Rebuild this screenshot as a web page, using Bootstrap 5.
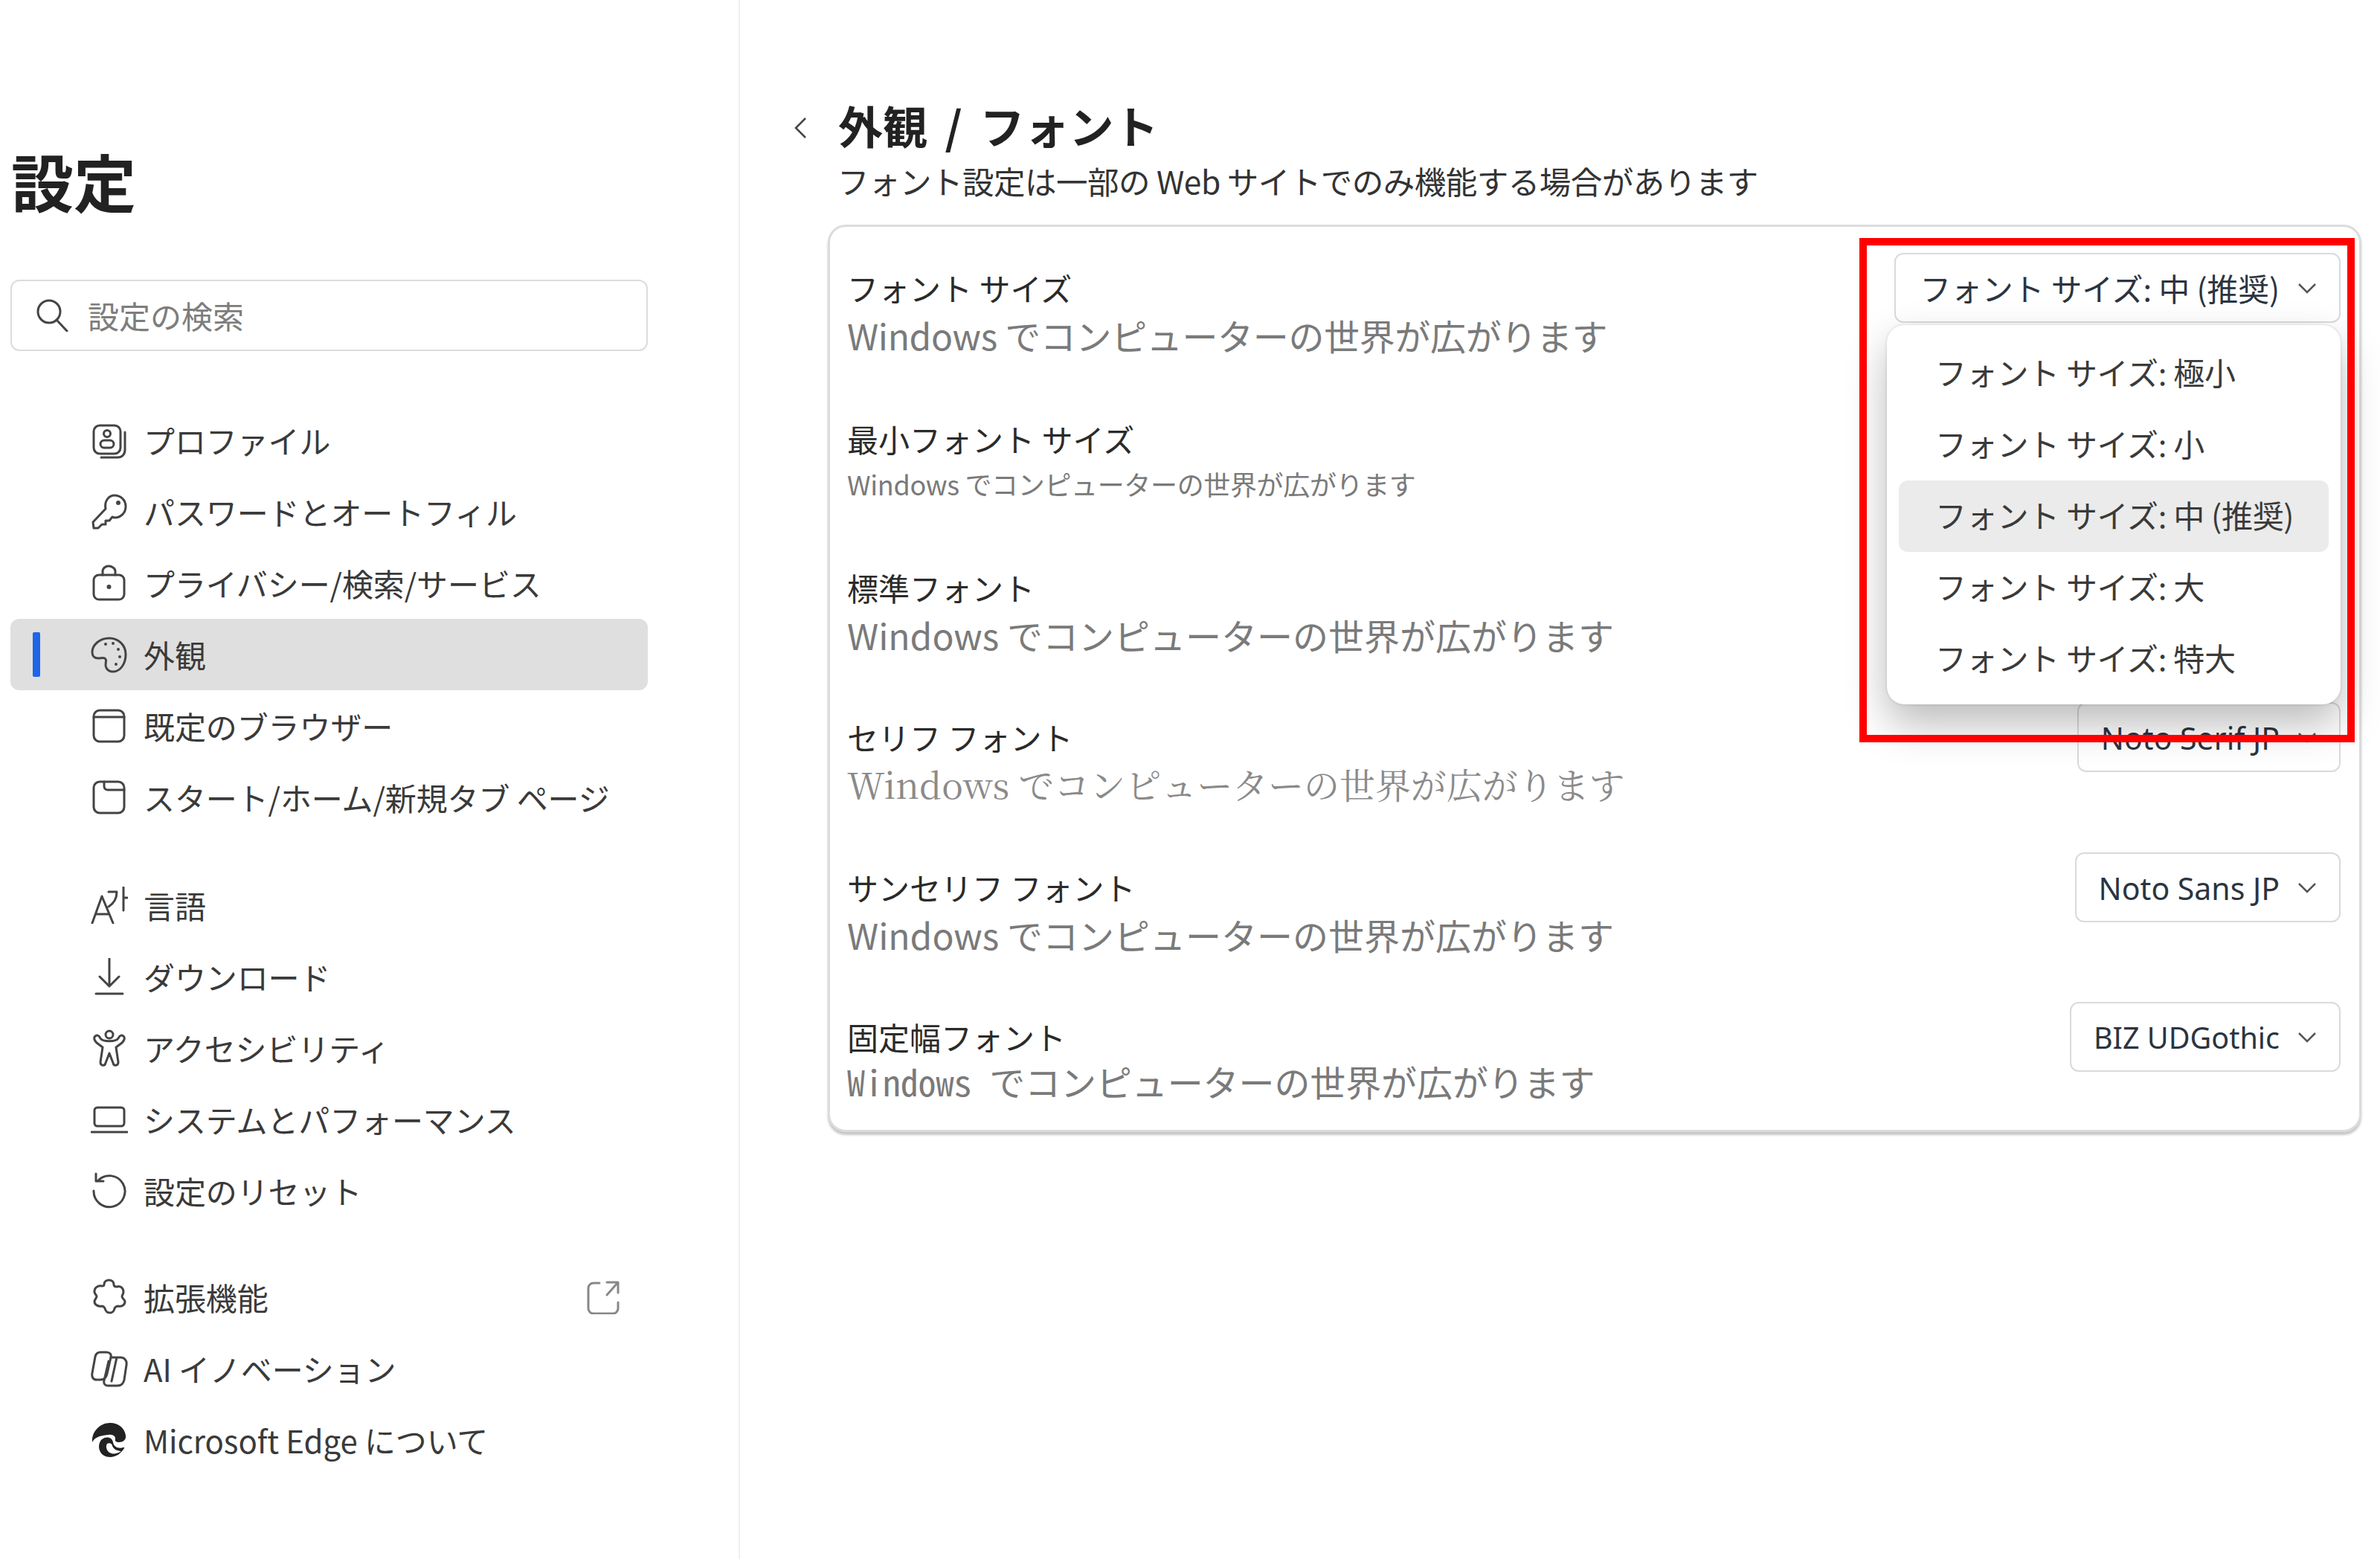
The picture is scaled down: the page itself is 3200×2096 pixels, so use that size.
<!DOCTYPE html>
<html lang="ja">
<head>
<meta charset="utf-8">
<title>設定</title>
<link href="https://cdn.jsdelivr.net/npm/bootstrap@5.3.0/dist/css/bootstrap.min.css" rel="stylesheet">
<style>
:root{--jp:"Noto Sans CJK JP","Noto Sans",sans-serif}
html,body{height:100%}
body{font-family:var(--jp);background:#fff;color:#333;width:3200px;height:2096px;overflow:hidden}
.side-pane{width:995px;height:2096px;flex:none;border-right:2px solid #efefef;padding:193px 122px 0 14px}
.side-title{font-size:84px;line-height:100px;font-weight:700;color:#222;margin:0 0 83px 1px}
.side-search{height:96px;border:2px solid #dcdcdc;border-radius:12px;padding-left:32px;gap:26px;margin-bottom:72px}
.side-search input{border:0;outline:0;padding:0;font-size:42px;line-height:60px;color:#333;background:none;box-shadow:none}
.side-search input::placeholder{color:#7d7d7d;opacity:1}
.side-group{margin-bottom:47px}
.side-group.first-group{margin-bottom:49px}
.side-link{height:96px;padding:0 0 0 108px;gap:21px;font-size:42px;line-height:56px;color:#3a3a3a;border-radius:12px;position:relative;letter-spacing:-.1px}
.side-link:hover{color:#3a3a3a}
.side-link.active{background:#dfdfdf}
.side-bar{position:absolute;left:30px;top:18px;width:10px;height:60px;background:#1f65e8;border-radius:2px}
.glyph{width:50px;height:50px;flex:none;fill:none;stroke:#444;stroke-width:3;stroke-linecap:round;stroke-linejoin:round}
.glyph-ext{width:44px;height:46px;stroke:#888;margin-left:auto;margin-right:38px}
.main-pane{padding:128px 25px 0 118px;flex:1;min-width:0}
.main-head{height:80px;gap:41px;margin-left:-47px}
.main-head svg{width:20px;height:30px;fill:none;stroke:#444;stroke-width:2.5;flex:none;margin-top:7px}
.main-title{font-size:60px;line-height:80px;font-weight:700;color:#222;margin:0;word-spacing:10px}
.main-sub{font-size:42.5px;line-height:60px;color:#333;margin:5px 0 29px 13px;letter-spacing:-.5px}
.font-card{border:3px solid #dcdcdc;border-radius:24px;padding:35px 25px 0 23px;height:1220px;box-shadow:0 4px 3px rgba(0,0,0,.22);background:#fff}
.font-row{height:201.4px;flex:none}
.font-copy{padding-top:20px}
.font-copy.lower{padding-top:22px}
.font-name{font-size:42px;line-height:54px;color:#2a2a2a}
.font-desc{font-size:48px;line-height:68px;color:#7a7a7a;margin-top:2px;letter-spacing:-.35px}
.font-desc.wide{letter-spacing:0}
.font-desc.tiny{font-size:36px;line-height:62px}
.font-desc.face-serif{font-family:"Noto Serif CJK JP","Liberation Serif",var(--jp);color:#8a8a8a;letter-spacing:-.05px}
.font-desc.face-mono{font-family:"Noto Sans Mono CJK JP","Liberation Mono",var(--jp);margin-top:-2px;letter-spacing:-.1px}
.font-pick{height:94px;padding:0 30px 0 33px;gap:24px;font-size:41.7px;color:#2b3440;border:2px solid #dadada;border-radius:12px;background:#fff;white-space:nowrap}
.font-pick svg{width:26px;height:16px;fill:none;stroke:#555;stroke-width:2.5;flex:none}
.font-pick.latin{font-family:"Noto Sans",var(--jp);font-size:41px;padding-left:30px;padding-top:4px}
.font-pick.latin svg{margin-top:-4px}
.font-pick.tight{font-size:39.5px}
.size-menu{display:block;position:absolute;top:97px;right:0;width:610px;padding:17px 16px 13px;border:0;border-radius:24px;background:#fff;box-shadow:0 0 4px rgba(0,0,0,.14),0 26px 56px rgba(0,0,0,.27)}
.size-menu .dropdown-item{height:96px;line-height:92px;padding:0 0 0 49px;font-size:42px;color:#3a3a3a;border-radius:12px;letter-spacing:-.3px}
.size-menu .dropdown-item.active{background:#ebebeb;color:#3a3a3a}
.red-frame{position:absolute;left:1384px;top:15px;width:666px;height:678px;border:10px solid #f00;pointer-events:none;z-index:1100}
</style>
</head>
<body class="d-flex">

<aside class="side-pane">
  <h1 class="side-title">設定</h1>
  <div class="side-search d-flex align-items-center">
    <svg class="glyph" style="width:44px;height:44px" viewBox="0 0 44 44"><circle cx="18" cy="17" r="15"/><path d="M28 28l14 15"/></svg>
    <input type="text" class="flex-grow-1" placeholder="設定の検索">
  </div>

  <nav class="nav flex-column side-group first-group">
    <a class="nav-link side-link d-flex align-items-center" href="#"><svg class="glyph" viewBox="0 0 50 50"><rect x="4" y="5" width="36" height="38" rx="8"/><path d="M46 14v24c0 6-4 10-10 10H14"/><circle cx="22" cy="16" r="4.5"/><rect x="13" y="25" width="18" height="10" rx="5"/></svg><span>プロファイル</span></a>
    <a class="nav-link side-link d-flex align-items-center" href="#"><svg class="glyph" viewBox="0 0 50 50"><path d="M32 3c8 0 15 6 15 15s-7 15-15 15l-3-1-4 5h-5v5h-5l-5 5H4l-1-8 17-18C18 11 24 3 32 3Z"/><circle cx="37" cy="13" r="1.5" fill="#444"/></svg><span>パスワードとオートフィル</span></a>
    <a class="nav-link side-link d-flex align-items-center" href="#"><svg class="glyph" viewBox="0 0 50 50"><rect x="4" y="14" width="41" height="33" rx="7"/><path d="M16 14V9c0-4 4-7 8-7s9 3 9 7v5"/><circle cx="24.500" cy="30" r="1.500" fill="#444"/></svg><span>プライバシー/検索/サービス</span></a>
    <a class="nav-link side-link active d-flex align-items-center" href="#"><span class="side-bar"></span><svg class="glyph" viewBox="0 0 50 50"><path d="M25 3C12 3 2 12 2 22c0 5 3 8 8 8 4 0 8-2 10 1 2 4-2 7 1 12 2 4 6 5 9 5 10 0 17-11 17-23C47 12 37 3 25 3Z"/><g fill="#444" stroke="none"><circle cx="20" cy="11" r="2"/><circle cx="30" cy="10" r="2"/><circle cx="37" cy="18" r="2"/><circle cx="39" cy="28" r="2"/><circle cx="34" cy="38" r="2"/></g></svg><span>外観</span></a>
    <a class="nav-link side-link d-flex align-items-center" href="#"><svg class="glyph" viewBox="0 0 50 50"><rect x="4" y="4" width="41" height="42" rx="8"/><path d="M4 13h41"/></svg><span>既定のブラウザー</span></a>
    <a class="nav-link side-link d-flex align-items-center" href="#"><svg class="glyph" viewBox="0 0 50 50"><rect x="4" y="4" width="41" height="42" rx="8"/><path d="M18 4v6c0 3 2 5 5 5h22"/></svg><span>スタート/ホーム/新規タブ ページ</span></a>
  </nav>

  <nav class="nav flex-column side-group">
    <a class="nav-link side-link d-flex align-items-center" href="#"><svg class="glyph" viewBox="0 0 50 50"><path d="M2 49 15 13l15 36M7 37h18M24 7h11c0 8-3 15-11 20M44 1v31M44 15h5"/></svg><span>言語</span></a>
    <a class="nav-link side-link d-flex align-items-center" href="#"><svg class="glyph" viewBox="0 0 50 50"><path d="M25 1v37M12 25l13 13 13-13M7 48h36"/></svg><span>ダウンロード</span></a>
    <a class="nav-link side-link d-flex align-items-center" href="#"><svg class="glyph" viewBox="0 0 50 50"><circle cx="25" cy="7" r="5"/><path d="M6 9c3-2 5-1 7 3 3 5 21 5 24 0 2-4 4-5 7-3 3 3 0 7-2 9l-8 6 3 20c0 5-6 6-7 1l-5-13-5 13c-1 5-7 4-7-1l3-20-8-6c-2-2-5-6-2-9Z"/></svg><span>アクセシビリティ</span></a>
    <a class="nav-link side-link d-flex align-items-center" href="#"><svg class="glyph" viewBox="0 0 50 50"><rect x="5" y="9" width="40" height="25" rx="4"/><path d="M1 42h48"/></svg><span>システムとパフォーマンス</span></a>
    <a class="nav-link side-link d-flex align-items-center" href="#"><svg class="glyph" viewBox="0 0 50 50"><path d="M10 11A21 21 0 1 1 4 25M7 2v10h10"/></svg><span>設定のリセット</span></a>
  </nav>

  <nav class="nav flex-column">
    <a class="nav-link side-link d-flex align-items-center" href="#"><svg class="glyph" viewBox="0 0 50 50"><path d="M18 8c0-8 13-8 13 0 0 2 1 3 4 3 5-2 9 2 9 7 0 3-2 4-2 6 0 3 4 4 4 7 0 5-5 7-9 6-3 0-4 1-5 3-1 8-11 8-13 0-1-2-2-3-4-3-5 1-10-2-10-6 0-3 3-5 3-7s-4-4-3-8c1-5 6-7 10-6 2 0 3-1 3-2Z"/></svg><span>拡張機能</span><svg class="glyph glyph-ext" viewBox="0 0 44 46"><path d="M17 4H9a7 7 0 0 0-7 7v27a7 7 0 0 0 7 7h26a7 7 0 0 0 7-7v-8M27 3h15v14M42 3 27 20"/></svg></a>
    <a class="nav-link side-link d-flex align-items-center" href="#"><svg class="glyph" viewBox="0 0 50 50"><path d="M13 3h8c5 0 7 3 6 7l-5 22c-1 5-4 8-9 8H8c-5 0-7-4-6-9l4-22c1-4 3-6 7-6Z"/><path d="M27 10h13c5 0 9 4 8 10l-3 20c-1 5-4 8-9 8H23c-4 0-6-3-5-7l6-26M35 10l-7 32"/></svg><span>AI イノベーション</span></a>
    <a class="nav-link side-link d-flex align-items-center" href="#"><svg class="glyph" viewBox="0 0 50 50" style="stroke:none"><path fill="#222" d="M2 28C1 13 13 2 26 2c11 0 20 7 21 17 1 6-4 9-9 9-4 0-6-2-5-4 1-3-3-7-9-6C11 19 5 22 2 28Z"/><path fill="#222" d="M15 24c7-5 14-2 15 4 1 7 8 9 14 7 1 0 2 0 1 1-4 7-11 12-19 12-6 0-12-3-14-9-2-5-1-11 3-15Z"/><path fill="#fff" d="M22 30c3-2 7 0 7 3 2 5 8 7 12 7-6 4-14 5-18 0-2-3-3-7-1-10Z"/></svg><span>Microsoft Edge について</span></a>
  </nav>
</aside>

<main class="main-pane">
  <div class="main-head d-flex align-items-center">
    <svg viewBox="0 0 20 30"><path d="M17 2 4 15l13 13"/></svg>
    <h2 class="main-title">外観 / フォント</h2>
  </div>
  <p class="main-sub">フォント設定は一部の Web サイトでのみ機能する場合があります</p>

  <div class="card font-card">
    <div class="font-row d-flex justify-content-between align-items-start">
      <div class="font-copy"><div class="font-name">フォント サイズ</div><div class="font-desc">Windows でコンピューターの世界が広がります</div></div>
      <div class="position-relative">
        <button type="button" class="btn font-pick d-flex align-items-center">フォント サイズ: 中 (推奨)<svg viewBox="0 0 26 16"><path d="M2 3l11 11L24 3"/></svg></button>
        <ul class="dropdown-menu size-menu list-unstyled m-0">
          <li><a class="dropdown-item" href="#">フォント サイズ: 極小</a></li>
          <li><a class="dropdown-item" href="#">フォント サイズ: 小</a></li>
          <li><a class="dropdown-item active" href="#">フォント サイズ: 中 (推奨)</a></li>
          <li><a class="dropdown-item" href="#">フォント サイズ: 大</a></li>
          <li><a class="dropdown-item" href="#">フォント サイズ: 特大</a></li>
        </ul>
      </div>
    </div>
    <div class="font-row d-flex justify-content-between align-items-start">
      <div class="font-copy lower"><div class="font-name">最小フォント サイズ</div><div class="font-desc tiny">Windows でコンピューターの世界が広がります</div></div>
    </div>
    <div class="font-row d-flex justify-content-between align-items-start">
      <div class="font-copy"><div class="font-name">標準フォント</div><div class="font-desc wide">Windows でコンピューターの世界が広がります</div></div>
    </div>
    <div class="font-row d-flex justify-content-between align-items-start">
      <div class="font-copy"><div class="font-name">セリフ フォント</div><div class="font-desc face-serif">Windows でコンピューターの世界が広がります</div></div>
      <button type="button" class="btn font-pick latin d-flex align-items-center">Noto Serif JP<svg viewBox="0 0 26 16"><path d="M2 3l11 11L24 3"/></svg></button>
    </div>
    <div class="font-row d-flex justify-content-between align-items-start">
      <div class="font-copy"><div class="font-name">サンセリフ フォント</div><div class="font-desc wide">Windows でコンピューターの世界が広がります</div></div>
      <button type="button" class="btn font-pick latin d-flex align-items-center">Noto Sans JP<svg viewBox="0 0 26 16"><path d="M2 3l11 11L24 3"/></svg></button>
    </div>
    <div class="font-row d-flex justify-content-between align-items-start">
      <div class="font-copy"><div class="font-name">固定幅フォント</div><div class="font-desc face-mono">Windows でコンピューターの世界が広がります</div></div>
      <button type="button" class="btn font-pick latin tight d-flex align-items-center">BIZ UDGothic<svg viewBox="0 0 26 16"><path d="M2 3l11 11L24 3"/></svg></button>
    </div>
    <div class="red-frame"></div>
  </div>
</main>

<script src="https://cdn.jsdelivr.net/npm/bootstrap@5.3.0/dist/js/bootstrap.bundle.min.js"></script>
</body>
</html>
